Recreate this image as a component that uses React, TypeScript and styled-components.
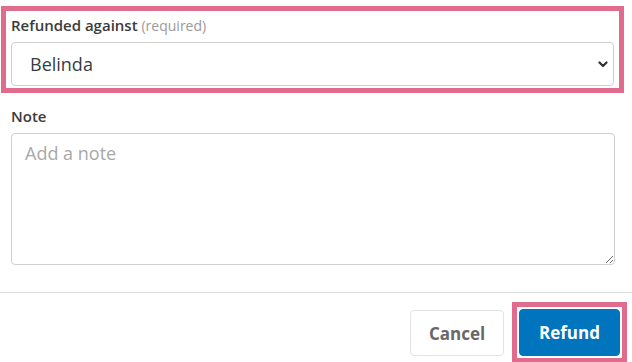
import React from "react";
import styled, { createGlobalStyle } from "styled-components";

const GlobalStyle = createGlobalStyle`
  html, body { margin: 0; padding: 0; background: #ffffff; }
  body { font-family: "Open Sans", "Noto Sans", Arial, sans-serif; }
  * { box-sizing: border-box; }
`;

const PINK = "#e16b8c";

const Page = styled.div`
  width: 632px;
  height: 362px;
  overflow: hidden;
  background: #fff;
  display: flex;
  flex-direction: column;
`;

const Body = styled.div`
  padding: 6px 8px 0 1px;
  display: flex;
  flex-direction: column;
`;

const HighlightField = styled.div`
  border: 5px solid ${PINK};
  padding: 4px 5px 2px 5px;
  display: flex;
  flex-direction: column;
`;

const Field = styled.div`
  padding: 13px 1px 0 10px;
  display: flex;
  flex-direction: column;
`;

const Label = styled.label`
  display: block;
  height: 20px;
  font-size: 15px;
  line-height: 20px;
  font-weight: 600;
  color: #3b3b3b;
  margin-bottom: 7px;
  white-space: nowrap;
`;

const Hint = styled.span`
  font-weight: 400;
  font-size: 14px;
  color: #9a9a9a;
`;

const SelectWrap = styled.div`
  position: relative;
  height: 44px;
`;

const Select = styled.select`
  appearance: none;
  -webkit-appearance: none;
  width: 100%;
  height: 44px;
  border: 1px solid #cfcfcf;
  border-radius: 4px;
  background: #fff;
  padding: 0 30px 0 18px;
  font-family: "Open Sans", "Noto Sans", Arial, sans-serif;
  font-size: 18px;
  color: #353d45;
  outline: none;
`;

const Chevron = styled.svg`
  position: absolute;
  right: 6px;
  top: 19px;
  width: 10px;
  height: 7px;
  pointer-events: none;
`;

const TextArea = styled.textarea`
  display: block;
  width: 604px;
  height: 132px;
  border: 1px solid #cfcfcf;
  border-radius: 4px;
  padding: 6px 13px;
  font-family: "Open Sans", "Noto Sans", Arial, sans-serif;
  font-size: 18px;
  line-height: 27px;
  color: #353d45;
  outline: none;
  &::placeholder { color: #a8a8a8; }
`;

const Divider = styled.hr`
  margin: 27px 0 0 0;
  border: 0;
  border-top: 1px solid #dddddd;
  height: 0;
`;

const Footer = styled.div`
  display: flex;
  justify-content: flex-end;
  align-items: flex-end;
  gap: 8px;
  padding: 9px 5px 0 0;
`;

const Highlight = styled.div`
  border: 5px solid ${PINK};
  padding: 2px;
  display: flex;
`;

const ButtonSlot = styled.div`
  padding-bottom: 7px;
  display: flex;
`;

const Button = styled.button<{ $primary?: boolean; $w: number; $h: number }>`
  width: ${(p) => p.$w}px;
  height: ${(p) => p.$h}px;
  border-radius: 4px;
  font-family: "Open Sans", "Noto Sans", Arial, sans-serif;
  font-weight: 700;
  font-size: 17px;
  cursor: pointer;
  border: 1px solid ${(p) => (p.$primary ? "#0074bd" : "#e3e3e3")};
  background: ${(p) => (p.$primary ? "#0074bd" : "#ffffff")};
  color: ${(p) => (p.$primary ? "#ffffff" : "#686868")};
  outline: none;
`;

export default function App() {
  return (
    <>
      <GlobalStyle />
      <Page>
        <Body>
          <HighlightField>
            <Label>
              Refunded against <Hint>(required)</Hint>
            </Label>
            <SelectWrap>
              <Select defaultValue="Belinda">
                <option>Belinda</option>
              </Select>
              <Chevron viewBox="0 0 10 7">
                <path d="M1.5 1.5 L5 5 L8.5 1.5" fill="none" stroke="#333" strokeWidth="2.2" strokeLinecap="round" strokeLinejoin="round" />
              </Chevron>
            </SelectWrap>
          </HighlightField>
          <Field>
            <Label>Note</Label>
            <TextArea placeholder="Add a note" />
          </Field>
        </Body>
        <Divider />
        <Footer>
          <ButtonSlot>
            <Button $w={94} $h={46}>Cancel</Button>
          </ButtonSlot>
          <Highlight>
            <Button $primary $w={101} $h={47}>Refund</Button>
          </Highlight>
        </Footer>
      </Page>
    </>
  );
}
